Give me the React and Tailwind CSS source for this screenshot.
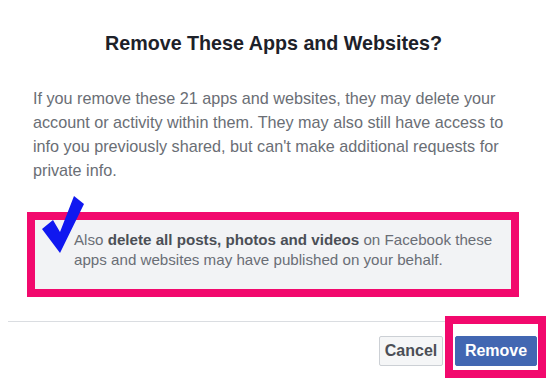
import React from 'react';

const App = () => {
  return (
    <div
      className="relative w-[546px] h-[379px] bg-white overflow-hidden"
      style={{ fontFamily: '"Liberation Sans", Arial, sans-serif' }}
    >
      {/* Title */}
      <h1 className="pt-[30px] pl-[105px] text-[19.7px] leading-[26px] font-bold text-[#1d2129] whitespace-nowrap">
        Remove These Apps and Websites?
      </h1>

      {/* Body */}
      <p className="mt-[30px] pl-[33px] pr-[28px] text-[16.2px] leading-[24px] text-[#6a6e75]">
        If you remove these 21 apps and websites, they may delete your account or activity within them. They may also still have access to info you previously shared, but can't make additional requests for private info.
      </p>

      {/* Highlighted option */}
      <div className="mt-[30px] ml-[27px] w-[492px] h-[85px] border-[8px] border-[#f2096d]">
        <div className="h-full bg-[#f2f3f5] pl-[39px] pt-[10px] text-[15.15px] leading-[20px] text-[#6a6e75]">
          Also <span className="font-bold text-[#4b4f56]">delete all posts, photos and videos</span> on Facebook these apps and websites may have published on your behalf.
        </div>
      </div>

      {/* Blue check annotation */}
      <svg
        className="absolute left-0 top-0"
        width="100"
        height="260"
        viewBox="0 0 100 260"
      >
        <polygon points="42,229 53,220 60,232 74,196 84,204 60,253" fill="#1018f0" />
      </svg>

      {/* Footer */}
      <div className="mt-[24px] ml-[8px] border-t border-[#dadde1]" />
      <div className="flex justify-end items-start">
        <button className="mt-[14px] w-[64px] h-[30px] border border-[#ccd0d5] bg-[#f5f6f7] rounded-[2px] text-[16px] font-bold text-[#4b4f56]">
          Cancel
        </button>
        <div className="ml-[2px] mt-[-6px] w-[101px] h-[62px] border-[8px] border-[#f2096d] bg-white pl-[2px] pt-[12px]">
          <button className="w-[82px] h-[30px] bg-[#4267b2] border border-[#4267b2] rounded-[2px] text-[16px] font-bold text-white">
            Remove
          </button>
        </div>
      </div>
    </div>
  );
};

export default App;
